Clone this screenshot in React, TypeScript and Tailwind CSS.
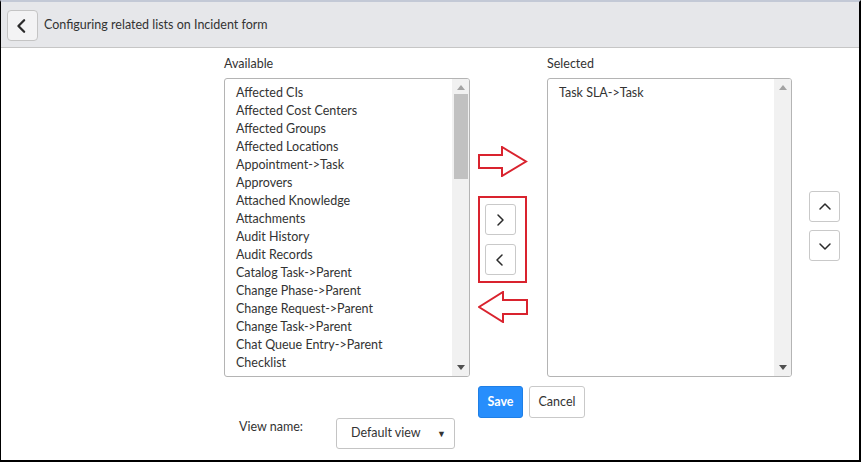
import React from "react";

const available = [
  "Affected CIs",
  "Affected Cost Centers",
  "Affected Groups",
  "Affected Locations",
  "Appointment->Task",
  "Approvers",
  "Attached Knowledge",
  "Attachments",
  "Audit History",
  "Audit Records",
  "Catalog Task->Parent",
  "Change Phase->Parent",
  "Change Request->Parent",
  "Change Task->Parent",
  "Chat Queue Entry->Parent",
  "Checklist",
];

const selected = ["Task SLA->Task"];

function Chevron({ dir, size = 12, stroke = 1.6 }: { dir: "left" | "right" | "up" | "down"; size?: number; stroke?: number }) {
  const paths: Record<string, string> = {
    left: "M8 2 L3 7 L8 12",
    right: "M4 2 L9 7 L4 12",
    up: "M2 9 L7 4 L12 9",
    down: "M2 5 L7 10 L12 5",
  };
  return (
    <svg width={size} height={size} viewBox="0 0 14 14" fill="none">
      <path d={paths[dir]} stroke="#2b2b2b" strokeWidth={stroke} strokeLinecap="round" strokeLinejoin="round" />
    </svg>
  );
}

function IconButton({ dir }: { dir: "left" | "right" | "up" | "down" }) {
  return (
    <button className="flex h-[31px] w-[31px] items-center justify-center rounded-[3px] border border-[#c9c9c9] bg-white">
      <Chevron dir={dir} size={14} stroke={1.5} />
    </button>
  );
}

function Scrollbar({ thumb }: { thumb: boolean }) {
  return (
    <div className="relative flex h-full w-[17px] flex-col items-center bg-[#f1f1f1]">
      <div className="mt-[6px] h-0 w-0 border-x-[4px] border-b-[5px] border-x-transparent border-b-[#a3a3a3]" />
      {thumb && <div className="mt-[4px] h-[85px] w-[14px] bg-[#c1c1c1]" />}
      <div className="absolute bottom-[6px] h-0 w-0 border-x-[4px] border-t-[5px] border-x-transparent border-t-[#505050]" />
    </div>
  );
}

function ListBox({ items, thumb }: { items: string[]; thumb: boolean }) {
  return (
    <div className="flex h-[299px] overflow-hidden rounded-[3px] border border-[#b4b4b4] bg-white">
      <div className="flex-1 overflow-hidden pl-[11px] pt-[5px]">
        {items.map((it) => (
          <div key={it} className="h-[18px] whitespace-nowrap leading-[18px]">
            {it}
          </div>
        ))}
      </div>
      <Scrollbar thumb={thumb} />
    </div>
  );
}

export default function App() {
  return (
    <div
      className="h-[462px] w-[861px] overflow-hidden border-b-2 border-l border-r-2 border-t-2 border-b-black border-l-black border-r-black border-t-[#c3c9d6] bg-white text-[12.5px] text-[#333]"
      style={{ fontFamily: "Lato, 'Open Sans', sans-serif" }}
    >
      {/* header */}
      <div className="flex h-[46px] items-center gap-[6px] border-b border-[#c6c6c6] bg-[#e6e7ea] pl-[6px] pt-[2px]">
        <button className="flex h-[31px] w-[31px] items-center justify-center rounded-[4px] border border-[#c4c4c4] bg-[#f3f3f4]">
          <Chevron dir="left" size={16} stroke={2} />
        </button>
        <span className="text-[#333]">Configuring related lists on Incident form</span>
      </div>

      <div className="pl-[223px] pt-[6px]">
        <div className="flex">
          {/* available */}
          <div className="w-[246px]">
            <div className="h-[20px] leading-[20px]">Available</div>
            <div className="mt-[4px]">
              <ListBox items={available} thumb />
            </div>
          </div>

          {/* move buttons */}
          <div className="w-[77px] pl-[8px] pt-[92px]">
            <svg width="50" height="31" viewBox="0 0 50 31" fill="none">
              <polygon points="1,9 24,9 24,1 48,15.5 24,30 24,22 1,22" stroke="#d9232e" strokeWidth="2" />
            </svg>
            <div className="mt-[19px] flex h-[87px] w-[49px] flex-col gap-[9px] border-2 border-[#d9232e] pl-[5px] pt-[6px]">
              <IconButton dir="right" />
              <IconButton dir="left" />
            </div>
            <svg className="mt-[8px]" width="50" height="32" viewBox="0 0 50 32" fill="none">
              <polygon points="49,9 25,9 25,1 1,16 25,31 25,23 49,23" stroke="#d9232e" strokeWidth="2" />
            </svg>
          </div>

          {/* selected */}
          <div className="w-[245px]">
            <div className="h-[20px] leading-[20px]">Selected</div>
            <div className="mt-[4px]">
              <ListBox items={selected} thumb={false} />
            </div>
          </div>

          <div className="flex flex-col gap-[8px] pl-[17px] pt-[137px]">
            <IconButton dir="up" />
            <IconButton dir="down" />
          </div>
        </div>

        {/* actions */}
        <div className="ml-[254px] mt-[9px] flex gap-[6px]">
          <button className="h-[32px] w-[45px] rounded-[3px] border border-[#1f7fe6] bg-[#278efc] font-bold text-white">
            Save
          </button>
          <button className="h-[32px] w-[56px] rounded-[3px] border border-[#c9c9c9] bg-white text-[#333]">
            Cancel
          </button>
        </div>

        <div className="flex">
          <div className="ml-[15px] w-[97px] leading-[18px]">View name:</div>
          <div className="flex h-[31px] w-[119px] items-center justify-between rounded-[3px] border border-[#c4c4c4] bg-white pl-[14px] pr-[8px]">
            <span>Default view</span>
            <span className="text-[9px] text-[#333]">▼</span>
          </div>
        </div>
      </div>
    </div>
  );
}
